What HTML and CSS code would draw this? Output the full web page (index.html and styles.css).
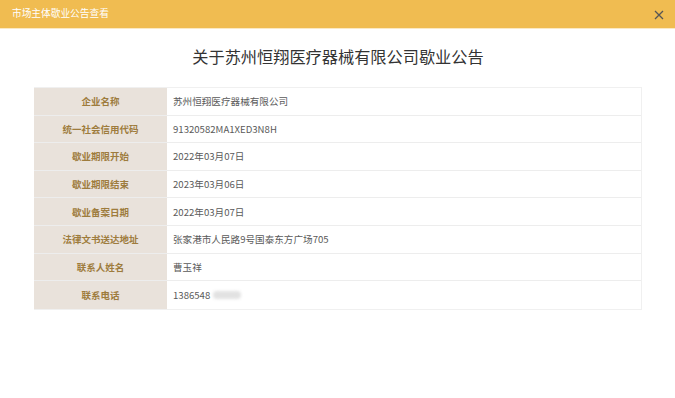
FILE: index.html
```html
<!DOCTYPE html>
<html lang="zh-CN">
<head>
<meta charset="utf-8">
<link rel="stylesheet" href="styles.css">
</head>
<body>
<div class="dialog">
  <div class="header">
    <span class="header-title">市场主体歇业公告查看</span>
    <svg class="close" width="10" height="10" viewBox="0 0 10 10"><path d="M1 1L9 9M9 1L1 9" stroke="#555" stroke-width="1.3"/></svg>
  </div>
  <div class="content">
    <h1 class="title">关于苏州恒翔医疗器械有限公司歇业公告</h1>
    <div class="table">
      <div class="row"><div class="label">企业名称</div><div class="value">苏州恒翔医疗器械有限公司</div></div>
      <div class="row"><div class="label">统一社会信用代码</div><div class="value">91320582MA1XED3N8H</div></div>
      <div class="row"><div class="label">歇业期限开始</div><div class="value">2022年03月07日</div></div>
      <div class="row"><div class="label">歇业期限结束</div><div class="value">2023年03月06日</div></div>
      <div class="row"><div class="label">歇业备案日期</div><div class="value">2022年03月07日</div></div>
      <div class="row"><div class="label">法律文书送达地址</div><div class="value">张家港市人民路9号国泰东方广场705</div></div>
      <div class="row"><div class="label">联系人姓名</div><div class="value">曹玉祥</div></div>
      <div class="row last"><div class="label">联系电话</div><div class="value">1386548<span class="blur"></span></div></div>
    </div>
  </div>
</div>
</body>
</html>
```
FILE: styles.css
```css
* { box-sizing: border-box; }
html, body { margin: 0; padding: 0; background: #fff; }
body { font-family: "Noto Sans CJK SC", "Microsoft YaHei", sans-serif; width: 675px; height: 398px; overflow: hidden; }
.dialog { display: flex; flex-direction: column; }
.header {
  height: 29px;
  background: #f0bc51;
  border-bottom: 1px solid #fbe9c4;
  display: flex;
  align-items: center;
  justify-content: space-between;
  padding: 0 11px 0 12px;
}
.header-title { color: #fff; font-size: 9.7px; line-height: 1; }
.close { display: block; margin-top: 1px; }
.content { padding: 16px 33px 0 34px; }
.title {
  margin: 0 0 20px 0;
  text-align: center;
  font-weight: 400;
  font-size: 16.2px;
  line-height: 22px;
  color: #333;
}
.table { width: 608px; border: 1px solid #f0f0f0; border-left: none; }
.row { display: flex; height: 27.6px; border-bottom: 1px solid #ededed; }
.row.last { border-bottom: none; }
.label {
  width: 133px;
  flex: none;
  background: #e9e2db;
  color: #9e7c3d;
  font-size: 9.5px;
  font-weight: 700;
  display: flex;
  align-items: center;
  justify-content: center;
}
.value {
  flex: 1;
  display: flex;
  align-items: center;
  padding-left: 6px;
  color: #5a5a5a;
  font-size: 9.6px;
}
.blur {
  display: inline-block;
  width: 28px;
  height: 8px;
  margin-left: 3px;
  border-radius: 4px;
  background: #e2e2e2;
  filter: blur(1.5px);
}
```
